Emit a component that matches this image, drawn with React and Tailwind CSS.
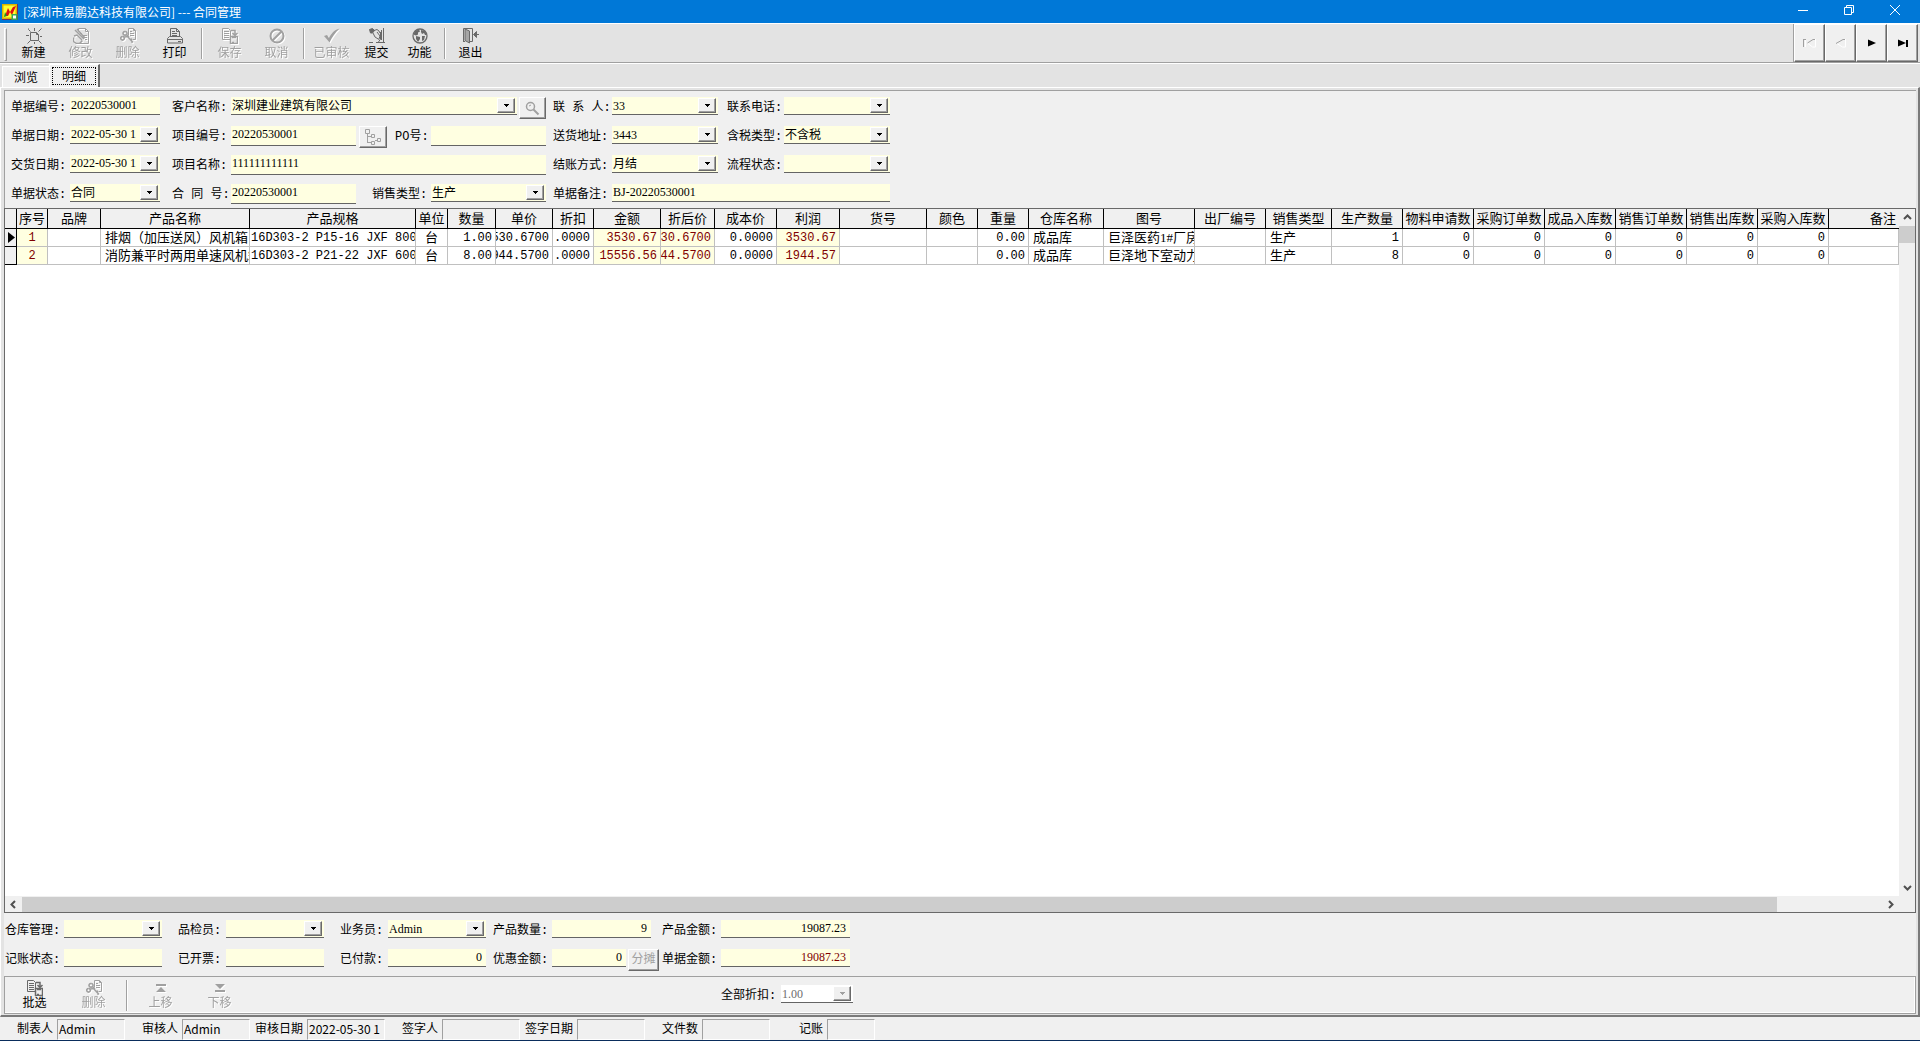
import { useState } from 'react'
import { clsx } from 'clsx'

const ICONS = {
  create: (
    <g fill="none" stroke="currentColor">
      <path d="M4.5 4.5h6l2 2v6h-8zM10.5 4.5v2h2M2.5 0.5v1l2 2M8.5 0v3M15.5 0.5l-3 3M0 7.5h3M14 8.5h2M4.5 12.5l-3 3M8.5 14v2M12.5 12.5l3 3" />
    </g>
  ),
  edit: (
    <g fill="none" stroke="currentColor">
      <path d="M5.5 3.5v-3h7l3 3v12h-11M12.5 0.5v3h3M7 5.5h2M10 7.5h4M11 9.5h3M12 11.5h2" />
      <path d="M2 2l9 9M4 1l8 9M1 8l3-1 5 5M0.5 9.5v4l3 2h3l3-3" strokeWidth="1.5" />
    </g>
  ),
  remove: (
    <g fill="none" stroke="currentColor">
      <path d="M8.500 7v-6.500h5l2 2v9h-3M13.500 0.500v2h2M10 3.500h2M10 5.500h4M10 7.500h4" />
      <path d="M5 3.500a2 1.800 0 1 0 0.100 0M2.500 8.500a1.800 1.800 0 1 0 0.100 0M6 6l3 3M4 9l5 -0.500M8 9l5 5.500M11 10.500l1 4" strokeWidth="1.600" />
    </g>
  ),
  print: (
    <g fill="none" stroke="currentColor">
      <path d="M3.5 8.500v-8h6l3 3v5M9.500 0.500v3h3M5 3.500h3M5 5.500h5M5 7.500h5M2.500 8.500h11l2 2v4.500h-15v-4.500zM0.500 11.500h15M11 13.500h3" />
    </g>
  ),
  save: (
    <g fill="none" stroke="currentColor">
      <path d="M0.500 0.500h6l2 2v9h-8zM2 3.500h5M2 5.500h5M2 7.500h5M2 9.500h5" />
      <path d="M9 2.500h4v4M10.500 5l2.500 2.500L15.500 5" strokeWidth="1.500" />
      <path d="M8.500 8.500h7v7h-7zM10 9.500h4M10 14.500h2" strokeWidth="1.500" />
    </g>
  ),
  cancel: (
    <g fill="none" stroke="currentColor" strokeWidth="2">
      <circle cx="8" cy="8" r="6.500" />
      <path d="M3.500 12.500l9-9" />
    </g>
  ),
  check: <path fill="currentColor" d="M0 8l3-1 2 3c2-4 5-8 10.500-9.500C11 5 8 9 5.500 14.500z" />,
  submit: (
    <g fill="none" stroke="currentColor">
      <path d="M0.500 1.500l3-1 2 2-2 2.500h-2z" fill="currentColor" />
      <path d="M5 2.500l3-1 2 1.500 1 2M4 5l2 4 4 2.500M8 4l3 4-1 3M11.500 4v7l-2 3M14.500 0v14M12.500 2v10M0 14.500h4M7 14.500h9" />
    </g>
  ),
  globe: (
    <g>
      <circle cx="8" cy="8" r="7" fill="none" stroke="currentColor" strokeWidth="1.300" />
      <path fill="currentColor" d="M3 3l4-1.500 1 2-2 1 0 2-2 1-2.500-1zM9 2l4 1 2 4-2 0-1-2-2 1-1-2zM4 8l4 1 0 2-2 3-2-3zM10 8l3 0-1 4-2 1z" />
    </g>
  ),
  exit: (
    <g fill="none" stroke="currentColor">
      <path d="M0.500 13.500v-13h9v13h-3M0 13.500h2" />
      <path d="M2 1l4.500 2v12l-4.500-2.500z" fill="currentColor" fillOpacity="0.500" />
      <path d="M11 6.500h5M10.500 6.500l3-3v6z" fill="currentColor" />
    </g>
  ),
  up: <path fill="currentColor" d="M3 4h10v2h-10zM8 7l5 5h-10z" />,
  down: <path fill="currentColor" d="M3 10h10v2h-10zM3 4h10l-5 5z" />,
}

const COLUMNS = [
  { title: '序号', width: 'w-[31px]', align: 'center', tint: true, num: true },
  { title: '品牌', width: 'w-[53px]' },
  { title: '产品名称', width: 'w-[149px]' },
  { title: '产品规格', width: 'w-[166px]', align: 'tight', num: true },
  { title: '单位', width: 'w-[32px]', align: 'center' },
  { title: '数量', width: 'w-[48px]', align: 'right', num: true },
  { title: '单价', width: 'w-[57px]', align: 'right', num: true },
  { title: '折扣', width: 'w-[41px]', align: 'right', num: true },
  { title: '金额', width: 'w-[67px]', align: 'right', tint: true, num: true },
  { title: '折后价', width: 'w-[54px]', align: 'right', tint: true, num: true },
  { title: '成本价', width: 'w-[62px]', align: 'right', num: true },
  { title: '利润', width: 'w-[63px]', align: 'right', tint: true, num: true },
  { title: '货号', width: 'w-[87px]' },
  { title: '颜色', width: 'w-[51px]' },
  { title: '重量', width: 'w-[51px]', align: 'right', num: true },
  { title: '仓库名称', width: 'w-[75px]' },
  { title: '图号', width: 'w-[91px]' },
  { title: '出厂编号', width: 'w-[71px]' },
  { title: '销售类型', width: 'w-[66px]' },
  { title: '生产数量', width: 'w-[71px]', align: 'right', num: true },
  { title: '物料申请数', width: 'w-[71px]', align: 'right', num: true },
  { title: '采购订单数', width: 'w-[71px]', align: 'right', num: true },
  { title: '成品入库数', width: 'w-[71px]', align: 'right', num: true },
  { title: '销售订单数', width: 'w-[71px]', align: 'right', num: true },
  { title: '销售出库数', width: 'w-[71px]', align: 'right', num: true },
  { title: '采购入库数', width: 'w-[71px]', align: 'right', num: true },
  { title: '备注', width: 'w-auto' },
]

const ROWS = [
  ['1', '', '排烟（加压送风）风机箱', '16D303-2 P15-16 JXF 800', '台', '1.00', '530.6700', '.0000', '3530.67', '30.6700', '0.0000', '3530.67', '', '', '0.00', '成品库', '巨泽医药1#厂房', '', '生产', '1', '0', '0', '0', '0', '0', '0', ''],
  ['2', '', '消防兼平时两用单速风机箱', '16D303-2 P21-22 JXF 600', '台', '8.00', '944.5700', '.0000', '15556.56', '44.5700', '0.0000', '1944.57', '', '', '0.00', '成品库', '巨泽地下室动力', '', '生产', '8', '0', '0', '0', '0', '0', '0', ''],
]

const STATUS = [
  { label: '制表人', value: 'Admin', width: 'w-[68px]' },
  { label: '审核人', value: 'Admin', width: 'w-[68px]' },
  { label: '审核日期', value: '2022-05-30 1', width: 'w-[78px]' },
  { label: '签字人', value: '', width: 'w-[78px]' },
  { label: '签字日期', value: '', width: 'w-[68px]' },
  { label: '文件数', value: '', width: 'w-[68px]' },
  { label: '记账', value: '', width: 'w-[48px]' },
]

function Icon({ name }) {
  return (
    <svg width="16" height="16" viewBox="0 0 16 16" aria-hidden="true">
      {ICONS[name]}
    </svg>
  )
}

function ToolButton({ icon, label, disabled, width = 'w-[47px]' }) {
  return (
    <button
      type="button"
      disabled={disabled}
      className={clsx(
        'flex flex-col items-center shrink-0 text-xs leading-4',
        width,
        disabled ? 'text-[#a0a0a0] drop-shadow-[1px_1px_0_#fff]' : 'text-black'
      )}
    >
      <span className={disabled ? 'text-[#a0a0a0]' : 'text-[#696969]'}>
        <Icon name={icon} />
      </span>
      {label}
    </button>
  )
}

function Separator() {
  return (
    <div className="w-2 shrink-0 flex justify-center">
      <div className="w-[2px] h-[31px] bg-[#a0a0a0] border-r border-white" />
    </div>
  )
}

function Caret({ disabled }) {
  return (
    <span className="pointer-events-none absolute right-[2px] top-px flex items-center justify-center w-[18px] h-[15px] bg-[#f0f0f0] border border-t-white border-l-white border-r-[#696969] border-b-[#696969] shadow-[inset_-1px_-1px_0_#a0a0a0]">
      <svg width="5" height="3" viewBox="0 0 5 3" shapeRendering="crispEdges">
        <path d="M0 0h5v1h-1v1h-1v1h-1v-1h-1v-1h-1z" fill={disabled ? '#a0a0a0' : '#000'} />
      </svg>
    </span>
  )
}

const fieldBase = "block w-full border-b border-[#646464] px-px font-['Liberation_Serif','Noto_Sans_CJK_SC',serif] text-xs leading-4 outline-none rounded-none"

function Field({ id, label, value = '', labelWidth = 'w-[59px]', width, kind = 'text', tall, right, red, disabled }) {
  const look = clsx(
    fieldBase,
    tall ? 'h-5 pb-[2px]' : 'h-[18px]',
    right && 'text-right pr-1',
    disabled ? 'bg-white text-[#6d6d6d]' : 'bg-[#ffffe1]',
    red && 'text-[#800000]'
  )
  return (
    <div className="flex shrink-0">
      <label htmlFor={id} className={clsx('shrink-0 whitespace-pre pt-px leading-5', labelWidth)}>{label}:</label>
      <div className={clsx('relative', width)}>
        {kind === 'select' ? (
          <select id={id} disabled={disabled} className={clsx(look, 'appearance-none opacity-100')}>
            <option>{value}</option>
          </select>
        ) : (
          <input id={id} type="text" defaultValue={value} className={look} />
        )}
        {kind !== 'text' && <Caret disabled={disabled} />}
      </div>
    </div>
  )
}

function SmallButton({ label, width, children }) {
  return (
    <button
      type="button"
      disabled
      aria-label={label}
      className={clsx(
        'flex items-center justify-center shrink-0 h-[22px] bg-[#f0f0f0] text-[#a0a0a0] border border-t-white border-l-white border-r-[#696969] border-b-[#696969] shadow-[inset_-1px_-1px_0_#a0a0a0]',
        width
      )}
    >
      {children}
    </button>
  )
}

function TitleBar() {
  return (
    <header className="h-[23px] bg-[#0078d7] text-white flex items-center justify-between pl-[2px] pr-[2px] text-xs">
      <div className="flex items-center gap-[5px]">
        <svg width="16" height="16" viewBox="0 0 16 16" aria-hidden="true">
          <rect width="16" height="16" fill="#7a2a5a" />
          <rect width="15" height="15" fill="#d8b400" />
          <rect x="1.500" y="1.500" width="12" height="12" fill="#ffff30" />
          <path d="M3 12L6 4l2 4 3-5 3-1-4 9-2-3-2 4z" fill="#e01010" />
          <path d="M2 13l1-5 2 4z" fill="#209020" />
          <path d="M9.500 10h6v6h-6z" fill="#3aa655" />
          <path d="M11 11.500h3v3h-3z" fill="#fff" />
        </svg>
        <h1 className="leading-4">[深圳市易鹏达科技有限公司] --- 合同管理</h1>
      </div>
      <div className="flex self-start">
        <button type="button" aria-label="最小化" className="w-[46px] h-5 flex items-center justify-center">
          <svg width="10" height="10"><path d="M0 5.500h10" stroke="#fff" /></svg>
        </button>
        <button type="button" aria-label="还原" className="w-[46px] h-5 flex items-center justify-center">
          <svg width="10" height="10" fill="none" stroke="#fff"><path d="M0.500 2.500h7v7h-7zM2.500 2.500v-2h7v7h-2" /></svg>
        </button>
        <button type="button" aria-label="关闭" className="w-[46px] h-5 flex items-center justify-center">
          <svg width="10" height="10" stroke="#fff"><path d="M0 0l10 10M10 0L0 10" /></svg>
        </button>
      </div>
    </header>
  )
}

function NavButton({ label, disabled, path, edge, bar }) {
  return (
    <button
      type="button"
      aria-label={label}
      disabled={disabled}
      className="w-[31px] h-[38px] flex items-center justify-center bg-[#f0f0f0] border border-t-white border-l-white border-r-[#696969] border-b-[#696969] shadow-[inset_-1px_-1px_0_#a0a0a0]"
    >
      <svg width="13" height="10" viewBox="0 0 13 10">
        {disabled ? (
          <g fill="none">
            <path d={path} stroke="#fff" />
            <path d={edge} stroke="#a0a0a0" />
          </g>
        ) : (
          <path d={path} fill="#000" />
        )}
        {bar && <path d={bar} fill={disabled ? '#a0a0a0' : '#000'} />}
      </svg>
    </button>
  )
}

function Toolbar() {
  return (
    <div className="h-[40px] border-t border-b border-t-white border-b-[#a0a0a0] flex justify-between shadow-[0_1px_0_#fff]">
      <div className="flex pl-1 pt-1">
        <div className="w-[3px] h-[33px] mr-[3px] border border-l-white border-t-white border-r-[#a0a0a0] border-b-[#a0a0a0]" />
        <ToolButton icon="create" label="新建" />
        <ToolButton icon="edit" label="修改" disabled />
        <ToolButton icon="remove" label="删除" disabled />
        <ToolButton icon="print" label="打印" />
        <Separator />
        <ToolButton icon="save" label="保存" disabled />
        <ToolButton icon="cancel" label="取消" disabled />
        <Separator />
        <ToolButton icon="check" label="已审核" disabled />
        <ToolButton icon="submit" label="提交" width="w-[43px]" />
        <ToolButton icon="globe" label="功能" width="w-[43px]" />
        <Separator />
        <ToolButton icon="exit" label="退出" width="w-[43px]" />
      </div>
      <div className="flex border-l border-[#a0a0a0] mr-[2px]">
        <NavButton label="首条" disabled path="M12.500 1v8h-3L5 5.500M2.500 1v8" edge="M12 1.500h-2L4.500 5" bar="M0 1h3v1H1v7H0z" />
        <NavButton label="上一条" disabled path="M11.500 1v8h-3L3 5.500" edge="M11 1.500h-2L2 5.500" />
        <NavButton label="下一条" path="M3 1.500l8 3.500-8 3.500z" />
        <NavButton label="末条" path="M2 1.500l8 3.500-8 3.500z" bar="M10 2h2v7h-2z" />
      </div>
    </div>
  )
}

function Tabs({ tab, onChange }) {
  return (
    <div role="tablist" className="flex items-end h-6 pl-[2px]">
      {['浏览', '明细'].map((name) => (
        <button
          key={name}
          type="button"
          role="tab"
          aria-selected={tab === name}
          onClick={() => onChange(name)}
          className={clsx(
            'text-xs bg-[#f0f0f0]',
            tab === name
              ? 'h-[23px] w-[51px] p-[2px] pt-px border-t border-l border-t-white border-l-white border-r-2 border-r-[#696969]'
              : 'h-[21px] w-[47px] border-t border-l border-white'
          )}
        >
          <span className={clsx('flex items-center justify-center', tab === name ? 'h-[18px] leading-4 border border-dotted border-black' : 'h-full')}>
            {name}
          </span>
        </button>
      ))}
    </div>
  )
}

function ContractForm() {
  return (
    <form className="flex flex-col gap-[9px] pt-[6px] pl-[6px] pb-1 [&>div]:h-5 [&>div]:flex [&>div]:items-start">
      <div>
        <Field id="docNo" label="单据编号" value="20220530001" width="w-[90px]" />
        <div className="w-[386px] flex pl-3">
          <Field id="customer" label="客户名称" value="深圳建业建筑有限公司" width="w-[286px]" kind="select" />
          <div className="w-[2px]" />
          <SmallButton label="查找客户" width="w-[27px]">
            <svg width="15" height="15" fill="none" stroke="currentColor">
              <circle cx="5.500" cy="5.500" r="4" strokeWidth="1.500" />
              <path d="M8.500 8.500l5 5" strokeWidth="2" />
              <path d="M4 5l2-1" />
            </svg>
          </SmallButton>
        </div>
        <div className="w-[181px] flex pl-[7px]">
          <Field id="contact" label="联 系 人" value="33" width="w-[106px]" kind="select" />
        </div>
        <Field id="phone" label="联系电话" labelWidth="w-[57px]" width="w-[106px]" kind="select" />
      </div>
      <div>
        <Field id="docDate" label="单据日期" value="2022-05-30 1" width="w-[90px]" kind="date" />
        <div className="w-[386px] flex pl-3">
          <Field id="projectNo" label="项目编号" value="20220530001" width="w-[125px]" tall />
          <div className="w-[3px]" />
          <SmallButton label="选择项目" width="w-[28px]">
            <svg width="16" height="16" fill="none" stroke="currentColor">
              <path d="M0.500 0.500h4v4h-4zM2.500 5v9M2.500 7.500h4M2.500 13.500h4M6.500 5.500h3v3h-3zM6.500 12.500h3v3h-3zM12.500 9.500h3v3h-3zM10 11.500h2" />
            </svg>
          </SmallButton>
          <div className="w-2" />
          <Field id="poNo" label="PO号" labelWidth="w-[36px]" width="w-[115px]" tall />
        </div>
        <div className="w-[181px] flex pl-[7px]">
          <Field id="address" label="送货地址" value="3443" width="w-[106px]" kind="select" />
        </div>
        <Field id="taxType" label="含税类型" value="不含税" labelWidth="w-[57px]" width="w-[106px]" kind="select" />
      </div>
      <div>
        <Field id="deliveryDate" label="交货日期" value="2022-05-30 1" width="w-[90px]" kind="date" />
        <div className="w-[386px] flex pl-3">
          <Field id="projectName" label="项目名称" value="111111111111" width="w-[315px]" tall />
        </div>
        <div className="w-[181px] flex pl-[7px]">
          <Field id="payment" label="结账方式" value="月结" width="w-[106px]" kind="select" />
        </div>
        <Field id="flowState" label="流程状态" labelWidth="w-[57px]" width="w-[106px]" kind="select" />
      </div>
      <div>
        <Field id="docState" label="单据状态" value="合同" width="w-[90px]" kind="select" />
        <div className="w-[386px] flex pl-3">
          <Field id="contractNo" label="合 同 号" value="20220530001" width="w-[125px]" tall />
          <div className="w-4" />
          <Field id="saleType" label="销售类型" value="生产" width="w-[115px]" kind="select" />
        </div>
        <div className="flex pl-[7px]">
          <Field id="remark" label="单据备注" value="BJ-20220530001" width="w-[278px]" />
        </div>
      </div>
    </form>
  )
}

function DetailTable() {
  return (
    <table className="w-full table-fixed border-separate border-spacing-0 text-[13px] leading-[17px] whitespace-nowrap font-['Liberation_Serif','Noto_Sans_CJK_SC',serif]">
      <thead>
        <tr>
          <th className="w-3 h-5 p-0 bg-[#f0f0f0] border-r border-b border-black" />
          {COLUMNS.map((c, i) => (
            <th
              key={c.title}
              className={clsx(
                'h-5 p-0 bg-[#f0f0f0] border-b border-black font-normal overflow-hidden',
                c.width,
                i < COLUMNS.length - 1 ? 'border-r text-center' : 'text-right pr-[3px]'
              )}
            >
              {c.title}
            </th>
          ))}
        </tr>
      </thead>
      <tbody>
        {ROWS.map((row, r) => (
          <tr key={r}>
            <td className="h-[18px] p-0 bg-[#f0f0f0] border-r border-b border-black">
              {r === 0 && (
                <svg className="ml-[3px]" width="7" height="11"><path d="M0 0l7 5.500-7 5.500z" /></svg>
              )}
            </td>
            {row.map((cell, i) => {
              const c = COLUMNS[i]
              return (
                <td
                  key={i}
                  className={clsx(
                    'h-[18px] p-0 border-r border-b border-[#c0c0c0] overflow-hidden',
                    c.tint && 'bg-[#ffffe1] text-[#800000]'
                  )}
                >
                  <div
                    className={clsx(
                      'flex',
                      c.align === 'right' && 'justify-end pr-[3px]',
                      c.align === 'center' && 'justify-center',
                      c.align === 'tight' && 'pl-px',
                      !c.align && 'pl-1',
                      c.num && "font-['Liberation_Mono',monospace] text-xs leading-4 pt-px"
                    )}
                  >
                    {cell}
                  </div>
                </td>
              )
            })}
          </tr>
        ))}
      </tbody>
    </table>
  )
}

function Chevron({ d }) {
  return (
    <svg width="9" height="9" viewBox="0 0 9 9" fill="none" stroke="#505050" strokeWidth="2">
      <path d={d} />
    </svg>
  )
}

function Grid() {
  return (
    <section className="flex-1 min-h-0 flex flex-col bg-[#f0f0f0] border border-[#696969]">
      <div className="flex-1 min-h-0 flex">
        <div className="flex-1 min-w-0 bg-white overflow-hidden">
          <DetailTable />
        </div>
        <div className="w-4 shrink-0 flex flex-col items-center">
          <div className="h-[17px] flex items-center"><Chevron d="M1 6l3.500-3.500L8 6" /></div>
          <div className="w-full h-[17px] bg-[#cdcdcd]" />
          <div className="flex-1" />
          <div className="h-[17px] flex items-center"><Chevron d="M1 3l3.500 3.500L8 3" /></div>
        </div>
      </div>
      <div className="h-4 pr-4 flex items-center">
        <div className="w-[17px] flex justify-center"><Chevron d="M6 1L2.500 4.500 6 8" /></div>
        <div className="flex-1 h-[15px] flex">
          <div className="flex-[50] bg-[#cdcdcd]" />
          <div className="flex-[3]" />
        </div>
        <div className="w-[17px] flex justify-center"><Chevron d="M3 1l3.500 3.500L3 8" /></div>
      </div>
    </section>
  )
}

function Totals() {
  return (
    <form className="flex flex-col gap-[9px] pt-[7px] pl-px pb-[7px] [&>div]:h-5 [&>div]:flex [&>div]:items-start">
      <div>
        <Field id="warehouse" label="仓库管理" width="w-[98px]" kind="select" />
        <div className="w-4" />
        <Field id="inspector" label="品检员" labelWidth="w-[48px]" width="w-[98px]" kind="select" />
        <div className="w-4" />
        <Field id="salesman" label="业务员" value="Admin" labelWidth="w-[48px]" width="w-[98px]" kind="select" />
        <div className="w-[7px]" />
        <Field id="totalQty" label="产品数量" value="9" width="w-[99px]" right />
        <div className="w-[11px]" />
        <Field id="totalAmount" label="产品金额" value="19087.23" width="w-[129px]" right />
      </div>
      <div>
        <Field id="bookState" label="记账状态" width="w-[98px]" />
        <div className="w-4" />
        <Field id="invoiced" label="已开票" labelWidth="w-[48px]" width="w-[98px]" />
        <div className="w-4" />
        <Field id="paid" label="已付款" value="0" labelWidth="w-[48px]" width="w-[98px]" right />
        <div className="w-[7px]" />
        <Field id="discount" label="优惠金额" value="0" width="w-[74px]" right />
        <div className="w-[2px]" />
        <SmallButton width="w-[31px]">分摊</SmallButton>
        <div className="w-[3px]" />
        <Field id="docAmount" label="单据金额" value="19087.23" width="w-[129px]" right red />
      </div>
    </form>
  )
}

function RowTools() {
  return (
    <div className="h-[38px] border border-[#a0a0a0] shadow-[inset_-1px_-1px_0_#fff] flex items-start pt-[3px] pl-[6px]">
      <ToolButton icon="save" label="批选" />
      <div className="w-3" />
      <ToolButton icon="remove" label="删除" disabled />
      <div className="w-[6px]" />
      <Separator />
      <div className="w-[6px]" />
      <ToolButton icon="up" label="上移" disabled />
      <div className="w-3" />
      <ToolButton icon="down" label="下移" disabled />
      <div className="w-[478px]" />
      <div className="pt-[5px]">
        <Field id="allDiscount" label="全部折扣" value="1.00" labelWidth="w-[60px]" width="w-[72px]" kind="select" disabled />
      </div>
    </div>
  )
}

function StatusBar() {
  return (
    <footer className="h-6 flex items-start bg-[#f0f0f0] pt-[2px] border-b border-[#0a2d5c] text-xs leading-[18px]">
      {STATUS.map((s) => (
        <div key={s.label} className="flex">
          <span className="w-[57px] text-right pr-1">{s.label}</span>
          <span className={clsx('h-[21px] pl-px whitespace-nowrap overflow-hidden border border-t-[#a0a0a0] border-l-[#a0a0a0] border-r-white border-b-white', s.width)}>
            {s.value}
          </span>
        </div>
      ))}
    </footer>
  )
}

export default function App() {
  const [tab, setTab] = useState('明细')

  return (
    <div className="h-screen flex flex-col overflow-hidden bg-[#e3e3e3] text-black font-['Noto_Sans_CJK_SC',sans-serif]">
      <TitleBar />
      <Toolbar />
      <Tabs tab={tab} onChange={setTab} />
      <main className="flex-1 min-h-0 flex flex-col pt-[2px] pl-[3px] pr-[2px] pb-px border-t border-l border-t-white border-l-white border-r-2 border-b-2 border-r-[#7a7a7a] border-b-[#7a7a7a]">
        <div className="flex-1 min-h-0 flex flex-col bg-[#f0f0f0] text-xs font-['Liberation_Mono','Noto_Sans_CJK_SC',monospace]">
          <div className="border-t border-l border-[#a0a0a0]">
            <ContractForm />
          </div>
          <Grid />
          <Totals />
          <RowTools />
        </div>
      </main>
      <StatusBar />
    </div>
  )
}
